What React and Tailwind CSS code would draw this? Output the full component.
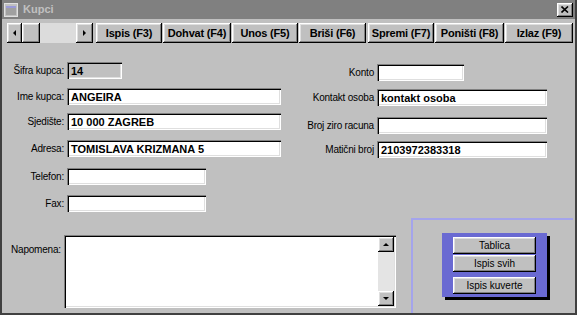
import React from "react";

const raised =
  "bg-[#c0c0c0] shadow-[inset_-1px_-1px_#000,inset_1px_1px_#fff,inset_-2px_-2px_#808080,inset_2px_2px_#dfdfdf]";
const sunken =
  "shadow-[inset_1px_1px_#808080,inset_2px_2px_#000,inset_-1px_-1px_#fff,inset_-2px_-2px_#dfdfdf]";

function TBtn({ w, children, ml = 0 }) {
  return (
    <div
      className={`${raised} h-[20px] flex items-center justify-center font-bold text-[11px] tracking-[-0.2px] text-black whitespace-nowrap`}
      style={{ width: w, marginLeft: ml }}
    >
      {children}
    </div>
  );
}

function Field({ w, value, grey }) {
  return (
    <div
      className={`${sunken} ${grey ? "bg-[#c0c0c0]" : "bg-white"} h-[17px] flex items-center pl-[4px] pt-[1px] font-bold text-[11px] text-black whitespace-nowrap overflow-hidden`}
      style={{ width: w }}
    >
      {value}
    </div>
  );
}

function Row({ label, lw, w, value, grey, mt }) {
  return (
    <div className="flex items-center h-[17px]" style={{ marginTop: mt }}>
      <div
        className="text-right text-[10px] tracking-[-0.2px] text-black pr-[3px] whitespace-nowrap"
        style={{ width: lw }}
      >
        {label}
      </div>
      <Field w={w} value={value} grey={grey} />
    </div>
  );
}

function Tri({ dir }) {
  const pts = {
    left: "4,0 4,6 1,3",
    right: "1,0 1,6 4,3",
    up: "0,4 6,4 3,1",
    down: "0,1 6,1 3,4",
  }[dir];
  const big = dir === "up" || dir === "down";
  return (
    <svg width={big ? 6 : 5} height={big ? 5 : 6} viewBox={big ? "0 0 6 5" : "0 0 5 6"}>
      <polygon points={pts} fill="#000" />
    </svg>
  );
}

function SmallBtn({ children }) {
  return (
    <div
      className={`${raised} w-[83px] h-[17px] flex items-center justify-center text-[10px] text-black whitespace-nowrap`}
    >
      {children}
    </div>
  );
}

export default function App() {
  return (
    <div className="w-[577px] h-[315px] bg-[#c0c0c0] border-l-2 border-r-2 border-b-2 border-[#404040] flex flex-col overflow-hidden font-['Liberation_Sans',Arial,sans-serif]">
      {/* title bar */}
      <div className="h-[19px] bg-[#808080] flex items-center pl-[2px] pr-[2px] shrink-0">
        <svg width="14" height="14" viewBox="0 0 14 14">
          <rect x="0.5" y="0.5" width="13" height="13" fill="#c0c0c0" stroke="#e0e0e0" />
          <rect x="2" y="3" width="10" height="9" fill="#a0a0a0" />
          <rect x="2" y="3" width="10" height="2" fill="#9a9ad8" />
        </svg>
        <div className="ml-[5px] text-[11px] font-bold text-[#c0c0c0]">Kupci</div>
        <div className="flex-1" />
        <div className={`${raised} w-[16px] h-[14px] flex items-center justify-center`}>
          <svg width="8" height="7" viewBox="0 0 8 7">
            <path d="M0.5 0.5 L7 6.5 M7 0.5 L0.5 6.5" stroke="#000" strokeWidth="1.6" />
          </svg>
        </div>
      </div>

      {/* toolbar */}
      <div className="flex items-center mt-[4px] pl-[5px] h-[20px] shrink-0">
        <div className={`${raised} w-[15px] h-[20px] flex items-center justify-center`}>
          <Tri dir="left" />
        </div>
        <div className={`${raised} w-[18px] h-[20px]`} />
        <div className="w-[36px] h-[20px] bg-[#dcdcdc]" />
        <div className={`${raised} w-[17px] h-[20px] flex items-center justify-center`}>
          <Tri dir="right" />
        </div>
        <TBtn w={66} ml={3}>Ispis (F3)</TBtn>
        <TBtn w={68} ml={1}>Dohvat (F4)</TBtn>
        <TBtn w={66} ml={1}>Unos (F5)</TBtn>
        <TBtn w={67} ml={1}>Briši (F6)</TBtn>
        <TBtn w={66} ml={2}>Spremi (F7)</TBtn>
        <TBtn w={69} ml={1}>Poništi (F8)</TBtn>
        <TBtn w={68} ml={1}>Izlaz (F9)</TBtn>
      </div>

      {/* form */}
      <div className="h-[175px] flex shrink-0">
        <div className="w-[288px] flex flex-col">
          <Row label="Šifra kupca:" lw={65} w={55} value="14" grey mt={19} />
          <Row label="Ime kupca:" lw={65} w={214} value="ANGEIRA" mt={9} />
          <Row label="Sjedište:" lw={65} w={214} value="10 000 ZAGREB" mt={8} />
          <Row label="Adresa:" lw={65} w={214} value="TOMISLAVA KRIZMANA 5" mt={10} />
          <Row label="Telefon:" lw={65} w={139} value="" mt={11} />
          <Row label="Fax:" lw={65} w={139} value="" mt={10} />
        </div>
        <div className="flex flex-col">
          <Row label="Konto" lw={87} w={87} value="" mt={21} />
          <Row label="Kontakt osoba" lw={87} w={170} value="kontakt osoba" mt={8} />
          <Row label="Broj ziro racuna" lw={87} w={170} value="" mt={11} />
          <Row label="Matični broj" lw={87} w={170} value="2103972383318" mt={7} />
        </div>
      </div>

      {/* bottom */}
      <div className="flex flex-1">
        <div className="flex pt-[17px]">
          <div className="w-[62px] pl-[9px] pt-[7px] text-[10px] tracking-[-0.2px] text-black whitespace-nowrap">Napomena:</div>
          <div className={`${sunken} bg-white w-[332px] h-[73px] flex justify-end p-[2px]`}>
            <div className="w-[16px] h-full bg-[#e4e4e4] flex flex-col justify-between">
              <div className={`${raised} w-[16px] h-[15px] flex items-center justify-center`}>
                <Tri dir="up" />
              </div>
              <div className={`${raised} w-[16px] h-[15px] flex items-center justify-center`}>
                <Tri dir="down" />
              </div>
            </div>
          </div>
        </div>
        <div className="ml-[15px] mr-[2px] flex-1 border-t-2 border-l-2 border-[#a4a4ec]">
          <div className="ml-[29px] mt-[13px] w-[105px] h-[64px] bg-[#6a6ad2] shadow-[3px_3px_0_#000] pl-[11px] pt-[4px] flex flex-col">
            <SmallBtn>Tablica</SmallBtn>
            <div className="mt-[1px]">
              <SmallBtn>Ispis svih</SmallBtn>
            </div>
            <div className="mt-[5px]">
              <SmallBtn>Ispis kuverte</SmallBtn>
            </div>
          </div>
        </div>
      </div>
    </div>
  );
}
